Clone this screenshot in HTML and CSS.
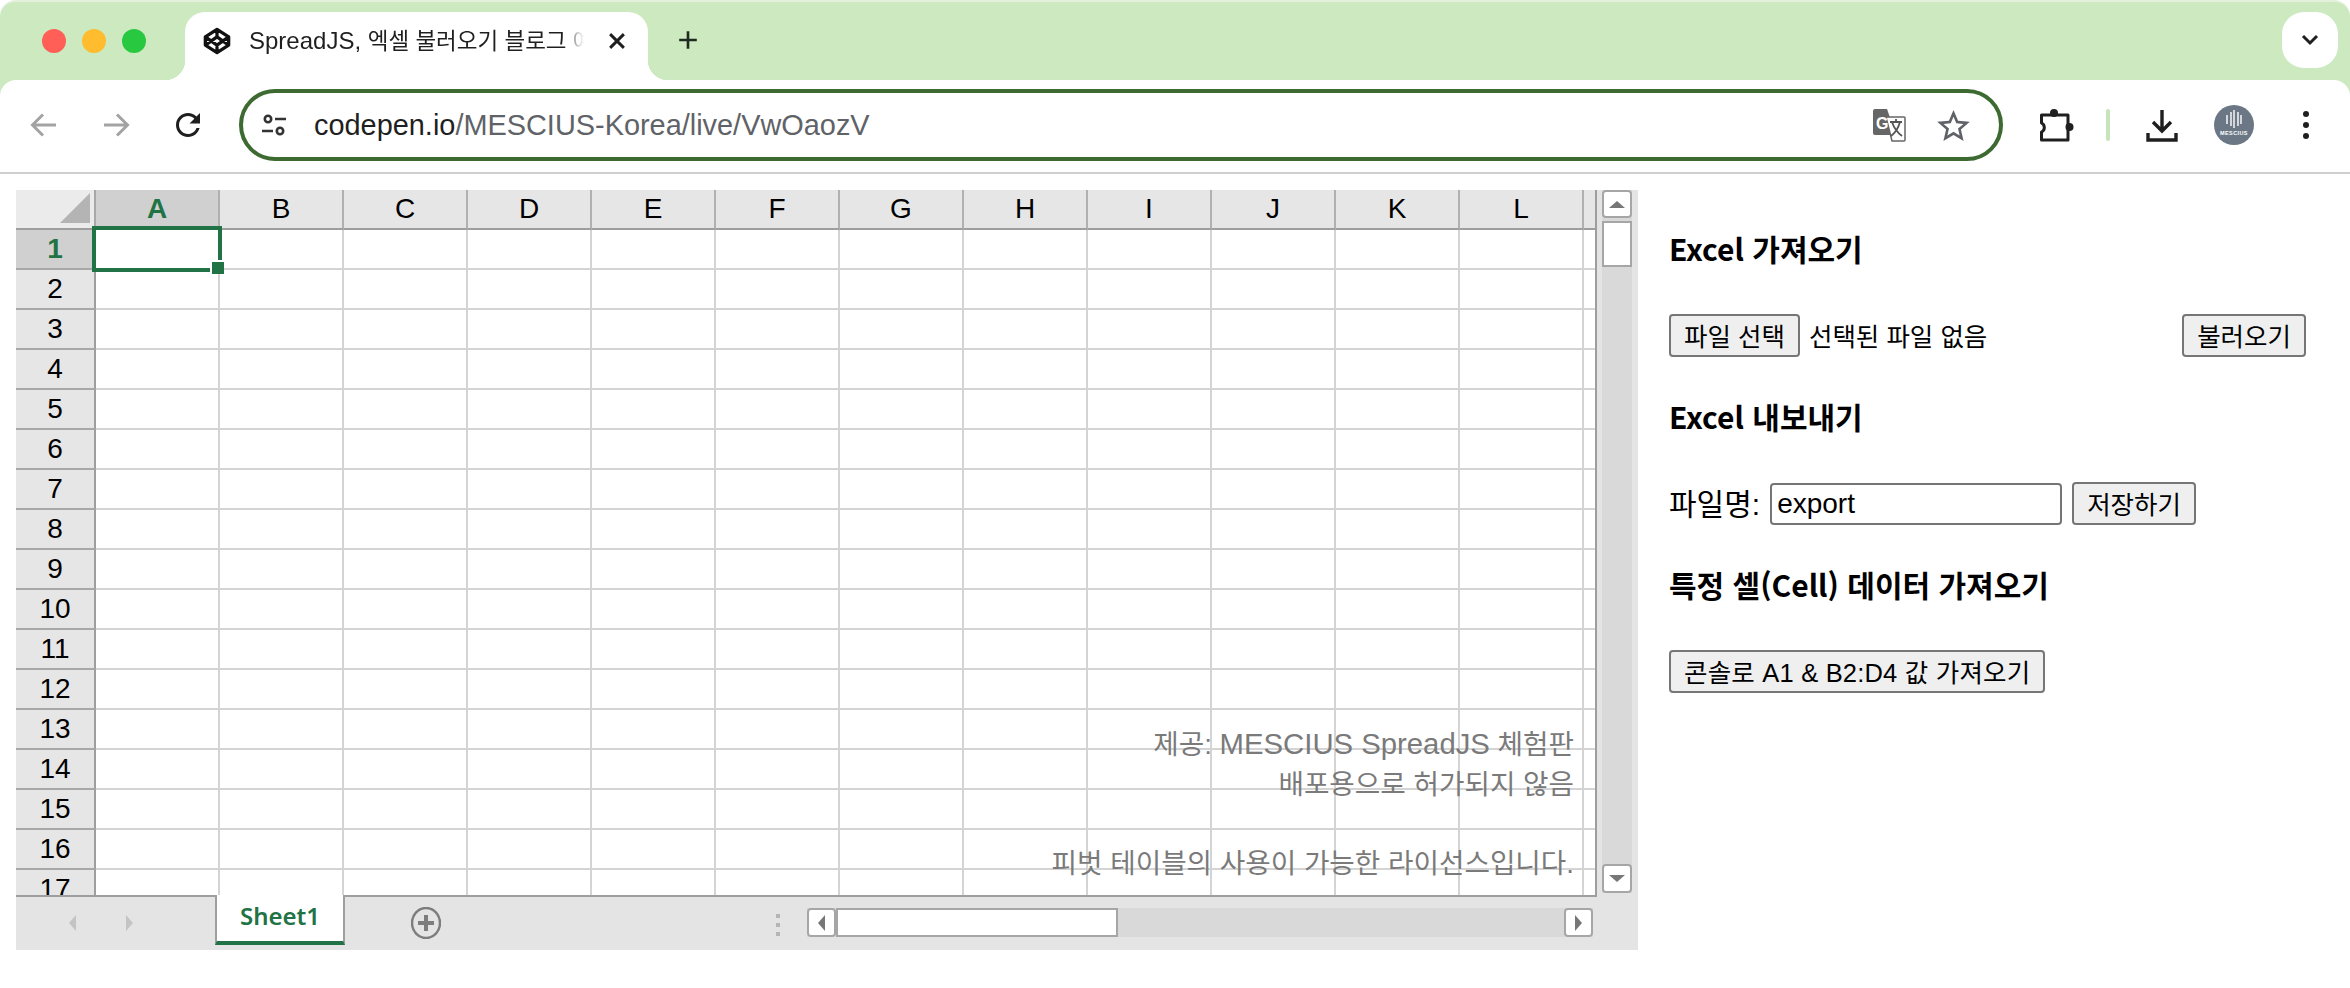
FILE: index.html
```html
<!DOCTYPE html>
<html lang="ko">
<head>
<meta charset="utf-8">
<title>SpreadJS, 엑셀 불러오기 블로그</title>
<link rel="stylesheet" href="styles.css">
</head>
<body>
<div class="chrome">
  <div class="tabstrip">
    <div class="lights"><span class="light red"></span><span class="light yellow"></span><span class="light green"></span></div>
    <div class="tab">
      <svg class="favicon" viewBox="0 0 24 24"><path d="M12 2 22 8.500V15.500L12 22 2 15.500V8.500ZM12 22V15.500M22 8.500 12 15.500 2 8.500M2 15.500 12 8.500 22 15.500M12 2V8.500"/></svg>
      <span class="tab-title">SpreadJS, <span class="tab-ko">엑셀 불러오기 블로그 예제</span></span>
      <svg class="tab-close" viewBox="0 0 16 16"><path d="M3 3 13 13M13 3 3 13"/></svg>
    </div>
    <svg class="new-tab" viewBox="0 0 20 20"><path d="M10 2V18M2 10H18"/></svg>
    <div class="tab-menu"><svg viewBox="0 0 18 12"><path d="M2 2 9 9 16 2"/></svg></div>
  </div>
  <div class="toolbar">
    <div class="nav-slot"><svg class="nav-icon muted" viewBox="0 0 28 28"><path d="M26 14H3M13 3.500 2.500 14 13 24.500"/></svg></div>
    <div class="nav-slot"><svg class="nav-icon muted" viewBox="0 0 28 28"><path d="M2 14H25M15 3.500 25.500 14 15 24.500"/></svg></div>
    <div class="nav-slot"><svg class="reload" viewBox="0 0 24 24"><path d="M17.650 6.350C16.200 4.900 14.210 4 12 4c-4.420 0-7.990 3.580-7.990 8s3.570 8 7.990 8c3.730 0 6.840-2.550 7.730-6h-2.080c-.82 2.330-3.040 4-5.650 4-3.310 0-6-2.690-6-6s2.690-6 6-6c1.660 0 3.140.69 4.220 1.780L13 11h7V4l-2.350 2.350z"/></svg></div>
    <div class="address">
      <svg class="tune" viewBox="0 0 24 24"><circle cx="6" cy="6" r="3.200"/><path d="M13 6H24M0 18H11"/><circle cx="18" cy="18" r="3.200"/></svg>
      <span class="url"><span class="host">codepen.io</span>/MESCIUS-Korea/live/VwOaozV</span>
      <svg class="translate" viewBox="0 0 33 33">
        <path class="tr-back" d="M2 0H14L23 26H2A2 2 0 0 1 0 24V2A2 2 0 0 1 2 0Z"/>
        <path class="tr-front" d="M13 8H31A1 1 0 0 1 32 9V31A1 1 0 0 1 31 32H19Z"/>
        <text class="tr-g" x="3" y="20">G</text>
        <path class="tr-zh" d="M17 13H29M23 10V13M19 13C21 19 25 24 29 27M27 13C25 20 22 24 18 27"/>
      </svg>
      <svg class="star" viewBox="2 2 20 19"><path d="M22 9.240l-7.190-.62L12 2 9.190 8.630 2 9.240l5.460 4.730L5.820 21 12 17.270 18.180 21l-1.630-7.030L22 9.240zM12 15.400l-3.760 2.270 1-4.280-3.320-2.880 4.380-.38L12 6.100l1.710 4.040 4.380.38-3.320 2.880 1 4.280L12 15.400z"/></svg>
    </div>
    <svg class="puzzle" viewBox="0 0 34 33">
      <path class="puzzle-body" d="M1.500 6H28V31H1.500V23A5 5 0 0 0 1.500 14Z"/>
      <circle cx="14" cy="4" r="4"/><circle cx="29.500" cy="18" r="4"/>
    </svg>
    <span class="separator"></span>
    <svg class="download" viewBox="0 0 32 33"><path d="M16 1V21M7 13 16 22 25 13M2 24V31H30V24"/></svg>
    <svg class="avatar" viewBox="0 0 40 40">
      <circle cx="20" cy="20" r="20"/>
      <path d="M13 10V19M17 7V21M20 5V23M24 7V21M27 10V19"/>
      <text x="20" y="30">MESCIUS</text>
    </svg>
    <div class="dots"><span></span><span></span><span></span></div>
  </div>
</div>

<main class="content">
  <section class="sheet">
    <div class="viewport">
      <div class="row col-head">
        <div class="corner"><svg viewBox="0 0 30 30"><path d="M30 0V30H0Z"/></svg></div>
        <div class="ch active">A</div><div class="ch">B</div><div class="ch">C</div><div class="ch">D</div><div class="ch">E</div><div class="ch">F</div><div class="ch">G</div><div class="ch">H</div><div class="ch">I</div><div class="ch">J</div><div class="ch">K</div><div class="ch">L</div><div class="ch rest"></div>
      </div>
      <div class="row"><div class="rh active">1</div><div class="cells"></div></div>
      <div class="row"><div class="rh">2</div><div class="cells"></div></div>
      <div class="row"><div class="rh">3</div><div class="cells"></div></div>
      <div class="row"><div class="rh">4</div><div class="cells"></div></div>
      <div class="row"><div class="rh">5</div><div class="cells"></div></div>
      <div class="row"><div class="rh">6</div><div class="cells"></div></div>
      <div class="row"><div class="rh">7</div><div class="cells"></div></div>
      <div class="row"><div class="rh">8</div><div class="cells"></div></div>
      <div class="row"><div class="rh">9</div><div class="cells"></div></div>
      <div class="row"><div class="rh">10</div><div class="cells"></div></div>
      <div class="row"><div class="rh">11</div><div class="cells"></div></div>
      <div class="row"><div class="rh">12</div><div class="cells"></div></div>
      <div class="row"><div class="rh">13</div><div class="cells"></div></div>
      <div class="row"><div class="rh">14</div><div class="cells"></div></div>
      <div class="row"><div class="rh">15</div><div class="cells"></div></div>
      <div class="row"><div class="rh">16</div><div class="cells"></div></div>
      <div class="row"><div class="rh">17</div><div class="cells"></div></div>
      <div class="selection"><span class="handle"></span></div>
      <div class="watermark">
        <p>제공: <span class="wm-latin">MESCIUS SpreadJS</span> 체험판</p>
        <p>배포용으로 허가되지 않음</p>
        <p>&nbsp;</p>
        <p>피벗 테이블의 사용이 가능한 라이선스입니다.</p>
      </div>
    </div>
    <div class="vscroll">
      <div class="sb-btn vbtn"><i class="arrow up"></i></div>
      <div class="vthumb"></div>
      <div class="sb-btn vbtn down-btn"><i class="arrow down"></i></div>
    </div>
    <div class="tabbar">
      <div class="sheet-nav"><i class="arrow left faint"></i><i class="arrow right faint"></i></div>
      <div class="sheet-tab">Sheet1</div>
      <svg class="add-sheet" viewBox="0 0 30 32"><ellipse cx="15" cy="16" rx="14" ry="15"/><path d="M15 8V24M7 16H23"/></svg>
      <div class="grip"><span></span><span></span><span></span></div>
      <div class="hscroll">
        <div class="sb-btn hbtn"><i class="arrow left"></i></div>
        <div class="hthumb"></div>
        <div class="sb-btn hbtn end"><i class="arrow right"></i></div>
      </div>
    </div>
  </section>

  <aside class="panel">
    <h3 class="first">Excel 가져오기</h3>
    <div class="form-row spread">
      <button class="btn" type="button">파일 선택</button>
      <span class="file-label">선택된 파일 없음</span>
      <button class="btn push" type="button">불러오기</button>
    </div>
    <h3>Excel 내보내기</h3>
    <div class="form-row">
      <label class="name-label" for="fname">파일명:</label>
      <input class="name-input" id="fname" type="text" value="export">
      <button class="btn save" type="button">저장하기</button>
    </div>
    <h3>특정 셀(Cell) 데이터 가져오기</h3>
    <div class="form-row">
      <button class="btn wide" type="button">콘솔로 A1 &amp; B2:D4 값 가져오기</button>
    </div>
  </aside>
</main>
</body>
</html>
```
FILE: styles.css
```css
* { box-sizing: border-box; }
html, body { margin: 0; padding: 0; background: #fff; }
body {
  width: 2350px;
  height: 988px;
  overflow: hidden;
  font-family: "Liberation Sans", "Noto Sans CJK KR", sans-serif;
  color: #000;
}
svg { display: block; flex: none; }

/* browser chrome */
.chrome {
  background: #cde9c0;
  border-radius: 16px 16px 0 0;
  border-top: 2px solid #e3f1dc;
}
.tabstrip { display: flex; height: 78px; align-items: flex-start; }
.lights { display: flex; gap: 16px; margin: 27px 0 0 42px; }
.light { width: 24px; height: 24px; border-radius: 50%; }
.red { background: #ff5f57; }
.yellow { background: #febc2e; }
.green { background: #28c840; }
.tab {
  position: relative;
  display: flex;
  align-items: center;
  width: 463px;
  height: 68px;
  margin: 10px 0 0 39px;
  padding: 0 0 10px 18px;
  background: #fff;
  border-radius: 20px 20px 0 0;
}
.tab::before, .tab::after {
  content: "";
  position: absolute;
  bottom: 0;
  width: 20px;
  height: 20px;
}
.tab::before { left: -20px; background: radial-gradient(circle at 0 0, transparent 20px, #fff 20.500px); }
.tab::after { right: -20px; background: radial-gradient(circle at 100% 0, transparent 20px, #fff 20.500px); }
.favicon { width: 28px; height: 28px; fill: none; stroke: #111; stroke-width: 2.800; stroke-linejoin: round; }
.tab-title {
  width: 336px;
  margin-left: 18px;
  overflow: hidden;
  white-space: nowrap;
  font-size: 24px;
  line-height: 34px;
  color: #1f1f1f;
  -webkit-mask-image: linear-gradient(90deg, #000 94%, rgba(0,0,0,.2) 98%, transparent 100%);
  mask-image: linear-gradient(90deg, #000 94%, rgba(0,0,0,.2) 98%, transparent 100%);
}
.tab-ko { font-size: 22.500px; }
.tab-close { width: 22px; height: 22px; margin-left: 21px; fill: none; stroke: #1f1f1f; stroke-width: 2.100; }
.new-tab { width: 22px; height: 22px; margin: 27px 0 0 29px; fill: none; stroke: #1f2b1f; stroke-width: 2.400; }
.tab-menu {
  display: flex;
  align-items: center;
  justify-content: center;
  width: 56px;
  height: 56px;
  margin: 10px 12px 0 auto;
  background: #fff;
  border-radius: 22px;
}
.tab-menu svg { width: 18px; height: 12px; fill: none; stroke: #1f1f1f; stroke-width: 3; }

.toolbar {
  display: flex;
  align-items: center;
  height: 94px;
  padding: 0 0 2px 8px;
  background: #fff;
  border-radius: 16px 16px 0 0;
  border-bottom: 2px solid #cfcfcf;
}
.nav-slot { display: flex; align-items: center; justify-content: center; width: 72px; }
.nav-icon { width: 28px; height: 28px; fill: none; stroke-width: 3; }
.muted { stroke: #a3a3a3; }
.reload { width: 36px; height: 36px; fill: #1f1f1f; }
.address {
  display: flex;
  align-items: center;
  width: 1764px;
  height: 72px;
  margin-left: 15px;
  padding: 0 29px 0 19px;
  border: 4px solid #3c6a30;
  border-radius: 36px;
  background: #fff;
}
.tune { width: 24px; height: 24px; fill: none; stroke: #333; stroke-width: 2.600; }
.url {
  flex: 1;
  margin-left: 28px;
  font-size: 28.900px;
  line-height: 40px;
  color: #5f6368;
  white-space: nowrap;
}
.host { color: #1f1f1f; }
.translate { width: 33px; height: 33px; }
.tr-back { fill: #666; }
.tr-front { fill: #fff; stroke: #666; stroke-width: 1.500; }
.tr-g { font-family: "Liberation Sans", sans-serif; font-size: 16px; font-weight: 700; fill: #fff; }
.tr-zh { fill: none; stroke: #555; stroke-width: 1.800; }
.star { width: 33px; height: 31px; margin-left: 31px; fill: #5f6368; }
.puzzle { width: 34px; height: 33px; margin-left: 37px; fill: #1f1f1f; }
.puzzle-body { fill: none; stroke: #1f1f1f; stroke-width: 3; stroke-linejoin: round; }
.separator { width: 4px; height: 32px; margin-left: 32px; border-radius: 2px; background: #c5e6ba; }
.download { width: 32px; height: 33px; margin-left: 36px; fill: none; stroke: #1f1f1f; stroke-width: 3.400; }
.avatar { width: 40px; height: 40px; margin-left: 36px; }
.avatar circle { fill: #6b7785; }
.avatar path { fill: none; stroke: #fff; stroke-width: 1.400; }
.avatar text { font-family: "Liberation Sans", sans-serif; font-size: 5.500px; font-weight: 700; letter-spacing: .4px; text-anchor: middle; fill: #fff; }
.dots { display: flex; flex-direction: column; gap: 5px; margin-left: 49px; }
.dots span { width: 6px; height: 6px; border-radius: 50%; background: #1f1f1f; }

/* page */
.content { display: flex; align-items: flex-start; padding: 16px 0 0 16px; }

/* spreadsheet */
.sheet {
  display: grid;
  grid-template-columns: 1581px 41px;
  grid-template-rows: 705px 55px;
  width: 1622px;
  height: 760px;
  background: #e4e4e4;
}
.viewport {
  position: relative;
  overflow: hidden;
  background: #fff;
  border-right: 2px solid #9e9e9e;
}
.row { display: flex; height: 40px; }
.col-head { background: #e6e6e6; }
.corner {
  display: flex;
  align-items: flex-end;
  justify-content: flex-end;
  width: 80px;
  padding: 0 4px 5px 0;
  background: #ebebeb;
  border-right: 2px solid #a8a8a8;
  border-bottom: 2px solid #9e9e9e;
}
.corner svg { width: 30px; height: 30px; fill: #b4b4b4; }
.ch {
  width: 124px;
  border-right: 2px solid #b0b0b0;
  border-bottom: 2px solid #9e9e9e;
  font-size: 28px;
  line-height: 38px;
  text-align: center;
}
.ch.rest { flex: 1; border-right: 0; }
.ch.active { background: #d0d0d0; color: #217346; font-weight: 700; }
.rh {
  width: 80px;
  flex: none;
  background: #e6e6e6;
  border-right: 2px solid #9e9e9e;
  border-bottom: 2px solid #a8a8a8;
  font-size: 28px;
  line-height: 38px;
  text-align: center;
}
.rh.active { background: #d0d0d0; color: #217346; font-weight: 700; }
.cells {
  flex: 1;
  border-bottom: 2px solid #d4d4d4;
  background-image: linear-gradient(90deg, transparent 122px, #d4d4d4 122px);
  background-size: 124px 100%;
}
.selection {
  position: absolute;
  left: 76px;
  top: 36px;
  width: 130px;
  height: 46px;
  border: 4px solid #217346;
}
.handle {
  position: absolute;
  right: -6px;
  bottom: -6px;
  width: 14px;
  height: 14px;
  background: #217346;
  border: 2px solid #fff;
  border-width: 2px 0 0 2px;
}
.watermark {
  position: absolute;
  right: 21px;
  top: 534px;
  font-size: 27.700px;
  line-height: 39.500px;
  text-align: right;
  color: #7a7a7a;
  white-space: nowrap;
}
.watermark p { margin: 0; }
.wm-latin { font-size: 29.300px; }

/* scrollbars */
.vscroll {
  display: flex;
  flex-direction: column;
  width: 30px;
  height: 703px;
  margin-left: 5px;
  background: #d9d9d9;
}
.sb-btn {
  display: flex;
  align-items: center;
  justify-content: center;
  background: #fff;
  border: 2px solid #a6a6a6;
  border-radius: 4px;
}
.vbtn { height: 28px; }
.vthumb { height: 46px; margin-top: 3px; background: #fff; border: 2px solid #a6a6a6; }
.down-btn { margin-top: auto; height: 29px; }
.arrow { display: block; width: 0; height: 0; border-style: solid; border-color: transparent; }
.arrow.up { border-width: 0 8px 7px; border-bottom-color: #777; }
.arrow.down { border-width: 7px 8px 0; border-top-color: #777; }
.arrow.left { border-width: 8px 7px 8px 0; border-right-color: #777; }
.arrow.right { border-width: 8px 0 8px 7px; border-left-color: #777; }
.arrow.left.faint { border-right-color: #c4c4c4; }
.arrow.right.faint { border-left-color: #c4c4c4; }

/* tab bar */
.tabbar {
  grid-column: 1 / -1;
  display: flex;
  align-items: flex-start;
  border-top: 2px solid #9e9e9e;
  margin-right: 41px;
  width: 1581px;
}
.sheet-nav { display: flex; align-items: center; gap: 50px; flex: none; width: 199px; height: 53px; padding: 0 0 2px 53px; }
.sheet-tab {
  flex: none;
  width: 130px;
  height: 50px;
  margin-top: -2px;
  background: #fff;
  border: 2px solid #9e9e9e;
  border-top: 0;
  border-bottom: 4px solid #217346;
  color: #217346;
  font-family: "Noto Sans", sans-serif;
  font-weight: 600;
  font-size: 24px;
  line-height: 42px;
  text-align: center;
}
.add-sheet { width: 30px; height: 32px; margin: 10px 0 0 66px; fill: none; stroke: #7d7d7d; stroke-width: 2.500; }
.add-sheet path { stroke-width: 4; }
.grip { display: flex; flex-direction: column; gap: 5px; margin: 17px 0 0 335px; }
.grip span { width: 4px; height: 4px; background: #b5b5b5; }
.hscroll {
  display: flex;
  flex: none;
  width: 786px;
  height: 29px;
  margin: 11px 0 0 27px;
  background: #d9d9d9;
}
.hbtn { width: 29px; }
.hthumb { width: 282px; background: #fff; border: 2px solid #a6a6a6; }
.hbtn.end { margin-left: auto; }

/* side panel */
.panel { width: 637px; margin-left: 31px; padding-top: 40px; }
h3 {
  margin: 41px 0 48px;
  font-family: "Noto Sans CJK KR", sans-serif;
  font-size: 30px;
  font-weight: 700;
  line-height: 36px;
}
h3.first { margin-top: 0; }
.form-row { display: flex; align-items: center; height: 43px; font-size: 25.500px; }
.btn {
  height: 43px;
  padding: 0 13px 2px;
  background: #efefef;
  border: 2px solid #767676;
  border-radius: 4px;
  font: inherit;
  color: #000;
}
.wide { letter-spacing: .2px; }
.file-label { margin-left: 9px; padding-bottom: 2px; }
.push { margin-left: auto; }
.name-label { padding-bottom: 4px; font-size: 30px; }
.name-input {
  width: 292px;
  height: 42px;
  margin-left: 10px;
  padding: 0 5px;
  border: 2px solid #767676;
  border-radius: 4px;
  font-size: 28px;
  font-family: inherit;
  color: #000;
}
.save { margin-left: 10px; }
```
